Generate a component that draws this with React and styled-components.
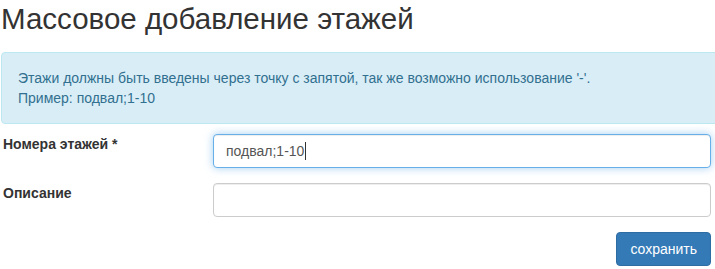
import React from 'react';
import styled, { createGlobalStyle } from 'styled-components';

const GlobalStyle = createGlobalStyle`
  html, body {
    margin: 0;
    padding: 0;
    background: #fff;
  }
  body {
    font-family: "Liberation Sans", Arial, sans-serif;
    font-size: 14px;
    line-height: 20px;
    color: #333;
  }
`;

const Page = styled.div`
  width: 715px;
  overflow: hidden;
  padding-left: 1px;
  box-sizing: border-box;
`;

const Title = styled.h3`
  margin: 3px 0 17px;
  font-size: 29.5px;
  font-weight: 400;
  line-height: 32px;
  color: #333;
`;

const Alert = styled.div`
  margin-right: -20px;
  margin-bottom: 10px;
  padding: 15px 16px;
  border: 1px solid #bce8f1;
  border-radius: 4px;
  background: #d9edf7;
  color: #31708f;
`;

const Form = styled.form`
  display: flex;
  flex-direction: column;
  gap: 15px;
  padding-right: 4px;
`;

const Row = styled.div`
  display: grid;
  grid-template-columns: 212px 1fr;
  align-items: start;
`;

const Label = styled.label`
  padding-left: 2px;
  font-weight: 700;
  color: #333;
`;

const Field = styled.div`
  display: flex;
  align-items: center;
  height: 34px;
  box-sizing: border-box;
  padding: 0 12px;
  border: 1px solid ${p => (p.$focused ? '#66afe9' : '#ccc')};
  border-radius: 4px;
  background: #fff;
  color: #555;
  box-shadow: ${p =>
    p.$focused
      ? 'inset 0 1px 1px rgba(0,0,0,.075), 0 0 8px rgba(102,175,233,.6)'
      : 'inset 0 1px 1px rgba(0,0,0,.075)'};
`;

const Caret = styled.span`
  display: inline-block;
  width: 1px;
  height: 18px;
  margin-left: 1px;
  background: #333;
`;

const Actions = styled.div`
  display: flex;
  justify-content: flex-end;
`;

const Button = styled.button`
  height: 34px;
  padding: 6px 13px;
  border: 1px solid #2e6da4;
  border-radius: 4px;
  background: #337ab7;
  color: #fff;
  font-family: inherit;
  font-size: 14px;
  line-height: 20px;
  cursor: pointer;
`;

export default function App() {
  return (
    <Page>
      <GlobalStyle />
      <Title>Массовое добавление этажей</Title>
      <Alert>
        Этажи должны быть введены через точку с запятой, так же возможно использование '-'.
        <br />
        Пример: подвал;1-10
      </Alert>
      <Form onSubmit={e => e.preventDefault()}>
        <Row>
          <Label>Номера этажей *</Label>
          <Field $focused>
            подвал;1-10
            <Caret />
          </Field>
        </Row>
        <Row>
          <Label>Описание</Label>
          <Field />
        </Row>
        <Actions>
          <Button type="submit">сохранить</Button>
        </Actions>
      </Form>
    </Page>
  );
}
